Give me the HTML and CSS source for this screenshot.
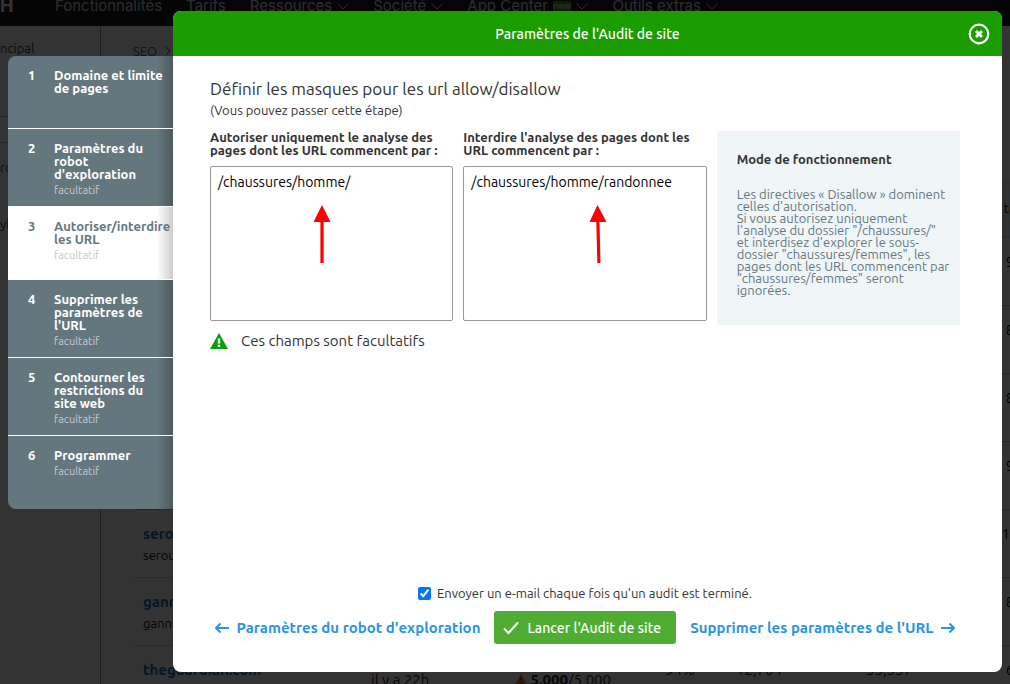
FILE: index.html
```html
<!DOCTYPE html>
<html lang="fr">
  <head>
    <meta charset="UTF-8">
    <meta name="viewport" content="width=device-width,initial-scale=1.0">
    <title>Paramètres de l'Audit de site</title>
    <link rel="stylesheet" href="styles.css">
  </head>
  <body>
    <div class="page">
      <header class="topbar">
        <span class="logo">H</span>
        <nav class="nav">
          <a href="#">Fonctionnalités</a>
          <a href="#">Tarifs</a>
          <a href="#">Ressources <svg class="chev" viewBox="0 0 12 7"><path d="M0.5 0.5 6 6 11.5 0.5"/></svg></a>
          <a href="#">Société <svg class="chev" viewBox="0 0 12 7"><path d="M0.5 0.5 6 6 11.5 0.5"/></svg></a>
          <a href="#">App Center <span class="new">new</span> <svg class="chev" viewBox="0 0 12 7"><path d="M0.5 0.5 6 6 11.5 0.5"/></svg></a>
          <a href="#">Outils extras <svg class="chev" viewBox="0 0 12 7"><path d="M0.5 0.5 6 6 11.5 0.5"/></svg></a>
        </nav>
      </header>
      <div class="content">
        <aside class="side">
          <div class="side-item">ncipal</div>
          <div class="side-item short"></div>
          <div class="side-item plain">rc</div>
          <div class="side-item plain">yla</div>
        </aside>
        <main class="main">
          <div class="crumbs">SEO <svg viewBox="0 0 6 10"><path d="M1 1 5 5 1 9"/></svg></div>
          <table class="sites">
            <colgroup>
              <col class="c-name"><col class="c-date"><col class="c-pages"><col class="c-score"><col class="c-count"><col><col class="c-num">
            </colgroup>
            <thead>
              <tr><th></th><th></th><th></th><th></th><th></th><th></th><th class="num">te</th></tr>
            </thead>
            <tbody>
              <tr><td></td><td></td><td></td><td></td><td></td><td></td><td class="num">9</td></tr>
              <tr><td></td><td></td><td></td><td></td><td></td><td></td><td class="num">8</td></tr>
              <tr><td></td><td></td><td></td><td></td><td></td><td></td><td class="num">8</td></tr>
              <tr><td></td><td></td><td></td><td></td><td></td><td></td><td class="num">9</td></tr>
              <tr><td><a href="#">sero</a><small>serou</small></td><td></td><td></td><td></td><td></td><td></td><td class="num">10</td></tr>
              <tr><td><a href="#">gann</a><small>ganne</small></td><td></td><td></td><td></td><td></td><td></td><td class="num">8</td></tr>
              <tr>
                <td><a href="#">theguardian.com</a></td>
                <td class="low">il y a 22h</td>
                <td class="low"><svg class="warn" viewBox="0 0 18 16"><path fill="#ff7a1a" d="M9 0 18 16H0Z"/><path fill="#333" d="M8 5h2v5H8zM8 12h2v2H8z"/></svg> <b>5,000</b>/5,000</td>
                <td>94%</td><td>12,704</td><td>33,337</td>
                <td class="num">6</td>
              </tr>
            </tbody>
          </table>
        </main>
      </div>
    </div>
    <div class="overlay"></div>

    <div class="modal">
      <ol class="steps">
        <li class="step"><span class="step-num">1</span><div>Domaine et limite<br>de pages</div></li>
        <li class="step"><span class="step-num">2</span><div>Paramètres du<br>robot<br>d'exploration<small>facultatif</small></div></li>
        <li class="step active"><span class="step-num">3</span><div>Autoriser/interdire<br>les URL<small>facultatif</small></div></li>
        <li class="step"><span class="step-num">4</span><div>Supprimer les<br>paramètres de<br>l'URL<small>facultatif</small></div></li>
        <li class="step"><span class="step-num">5</span><div>Contourner les<br>restrictions du<br>site web<small>facultatif</small></div></li>
        <li class="step"><span class="step-num">6</span><div>Programmer<small>facultatif</small></div></li>
      </ol>

      <section class="dialog" role="dialog" aria-labelledby="dialogTitle">
        <header class="dialog-head">
          <h1 id="dialogTitle">Paramètres de l'Audit de site</h1>
          <button class="close" type="button" aria-label="Fermer">
            <svg viewBox="0 0 22 22"><circle cx="11" cy="11" r="9.300" fill="none" stroke="#fff" stroke-width="2.200"/><path d="M8 8l6 6M14 8l-6 6" stroke="#fff" stroke-width="2.800"/></svg>
          </button>
        </header>

        <form class="dialog-body">
          <h2>Définir les masques pour les url allow/disallow</h2>
          <p class="hint">(Vous pouvez passer cette étape)</p>

          <div class="columns">
            <div class="field">
              <label for="allow">Autoriser uniquement le analyse des<br>pages dont les URL commencent par :</label>
              <textarea id="allow" spellcheck="false">/chaussures/homme/</textarea>
              <svg class="arrow arrow-allow" viewBox="0 0 18 58"><path d="M9 0 17.500 17H10.600V58H7.400V17H0.500Z"/></svg>
            </div>
            <div class="field">
              <label for="disallow">Interdire l'analyse des pages dont les<br>URL commencent par :</label>
              <textarea id="disallow" spellcheck="false">/chaussures/homme/randonnee</textarea>
              <svg class="arrow arrow-disallow" viewBox="0 0 18 58"><path d="M8.500 0 17.500 17H10.500L11.500 58H8.300L7.300 17H0.500Z"/></svg>
            </div>
            <aside class="info">
              <h3>Mode de fonctionnement</h3>
              <p>Les directives « Disallow » dominent<br>celles d'autorisation.<br>Si vous autorisez uniquement<br>l'analyse du dossier "/chaussures/"<br>et interdisez d'explorer le sous-<br>dossier "chaussures/femmes", les<br>pages dont les URL commencent par<br>"chaussures/femmes" seront<br>ignorées.</p>
            </aside>
          </div>

          <p class="note">
            <svg viewBox="0 0 18 16"><path fill="#0a9e0a" d="M9 0 18 16H0Z"/><path fill="#fff" d="M7.800 5.500h2.400v5H7.800zM7.800 11.800h2.400v2.200H7.800z"/></svg>
            Ces champs sont facultatifs
          </p>

          <footer class="foot">
            <label class="mail"><input type="checkbox" checked> Envoyer un e-mail chaque fois qu'un audit est terminé.</label>
            <div class="actions">
              <a href="#"><svg class="dir" viewBox="0 0 16 12"><path d="M15 6H2M6.500 1.500 2 6l4.500 4.500"/></svg>Paramètres du robot d'exploration</a>
              <button class="run" type="button"><svg viewBox="0 0 16 14"><path d="M1 7.500 5.500 12 15 1.500"/></svg>Lancer l'Audit de site</button>
              <a href="#">Supprimer les paramètres de l'URL<svg class="dir" viewBox="0 0 16 12"><path d="M1 6h13M9.500 1.500 14 6l-4.500 4.500"/></svg></a>
            </div>
          </footer>
        </form>
      </section>
    </div>
  </body>
</html>
```
FILE: styles.css
```css
:root{--green:#1b9c00;--slate:#65777e;--blue:#2b94e1;--text:#333;--radius:8px}
*{box-sizing:border-box}
body{margin:0;height:100vh;overflow:hidden;position:relative;font-family:Ubuntu,"Noto Sans","Open Sans",sans-serif;font-size:13px;color:var(--text)}
a{text-decoration:none}
h1,h2,h3,p{margin:0}

/* page behind the dialog */
.page{height:100%;display:flex;flex-direction:column;overflow:hidden;background:#fff}
.topbar{display:flex;align-items:flex-start;background:#1a1a1f;padding-bottom:14px;font-family:Inter,sans-serif}
.logo{width:55px;line-height:12px;font-size:18px;font-weight:700;color:#fff}
.nav{display:flex;gap:24px;line-height:12px;font-size:15px}
.nav a{color:#ddd;white-space:nowrap;display:flex;align-items:center;gap:5px}
.chev{width:12px;height:7px;fill:none;stroke:#ddd}
.new{background:#3f8f2a;color:#b5e8a0;font-size:9px;line-height:10px;font-weight:700}
.content{flex:1;display:flex;min-height:0}
.side{flex:0 0 101px;border-right:1px solid #999}
.side-item{height:91px;padding-top:15px;border-bottom:1px solid #bbb}
.side-item.short{height:26px;padding:0}
.side-item.plain{height:57px;border:0;padding-top:17px}
.main{flex:1;padding:17px 0 0 32px;overflow:hidden}
.crumbs{display:flex;align-items:center;gap:8px;line-height:16px;color:#666}
.crumbs svg{width:6px;height:10px;fill:none;stroke:#444}
.sites{width:calc(100% + 16px);margin-top:121px;border-collapse:collapse;table-layout:fixed}
.c-name{width:228px}
.c-date{width:144px}
.c-pages{width:150px}
.c-score{width:71px}
.c-count{width:130px}
.c-num{width:32px}
.sites th{height:57px;background:#e9eef2;font-weight:400}
.sites td{height:68px;padding:12px 10px 0;border-top:1px solid #ccc;vertical-align:top;white-space:nowrap;font-size:15px;line-height:24px;color:#222}
.sites a{display:block;font-weight:700;color:#1470bd}
.sites small{display:block;font-size:13px;line-height:18px;color:#111}
.sites .num{padding-left:0;padding-right:0;text-align:center;color:#000}
.sites td.low{padding-top:22px}
.warn{width:12px;height:11px}
.overlay{position:absolute;inset:0;background:rgba(0,0,0,.8)}

/* modal = list of steps + white dialog */
.modal{position:absolute;inset:11px 8px 12px;display:flex;align-items:flex-start}
.steps{flex:0 0 165px;margin:45px 0 0;padding:0;list-style:none;border-radius:var(--radius) 0 0 var(--radius);overflow:hidden;background:var(--slate);color:#fff;font-weight:700;line-height:13px}
.step{display:flex;min-height:73px;padding:13px 0 9px 20px;border-bottom:1px solid #fff;white-space:nowrap;background:linear-gradient(to left,rgba(0,0,0,.25),transparent 16px)}
.step:last-child{border-bottom:0}
.step-num{width:26px}
.step small{display:block;margin-top:2px;line-height:14px;font-size:11px;font-weight:400;color:#c3c9cb}
.step.active{background:linear-gradient(to left,rgba(0,0,0,.2),transparent 16px),#fff;color:var(--slate)}
.dialog{flex:1;height:100%;display:flex;flex-direction:column;border-radius:var(--radius);overflow:hidden;background:#fff}
.dialog-head{display:grid;grid-template-columns:1fr auto 1fr;align-items:center;height:45px;padding:0 12px;background:var(--green);color:#fff}
.dialog-head h1{grid-column:2;font-size:14px;font-weight:500}
.close{justify-self:end;width:22px;height:22px;padding:0;border:0;background:none;cursor:pointer}
.close svg{display:block}
.dialog-body{flex:1;display:flex;flex-direction:column;padding:20px 42px 28px 37px}
.dialog-body h2{font-size:17px;line-height:26px;font-weight:400}
.hint{line-height:16px}
.columns{display:grid;grid-template-columns:repeat(3,minmax(0,1fr));gap:10px;margin-top:13px}
.field{position:relative}
.field label{display:block;line-height:13px;font-weight:700;white-space:nowrap}
textarea{display:block;width:100%;height:155px;margin-top:9px;padding:6px 7px;resize:none;border:1px solid #999;border-radius:2px;font:14px/18px Ubuntu,"Noto Sans","Open Sans",sans-serif;color:#000}
.arrow{position:absolute;top:74px;width:18px;height:58px;fill:#f00}
.arrow-allow{left:103px}
.arrow-disallow{left:126px}
.info{padding:20px 20px 29px;background:#f0f5f8;color:#65777e;white-space:nowrap}
.info h3{font-size:13px;line-height:16px;color:#333}
.info p{margin-top:21px;line-height:12px}
.note{display:flex;align-items:center;gap:13px;margin-top:6px;font-size:15px;line-height:20px}
.note svg{width:18px;height:16px}
.foot{margin-top:auto}
.mail{display:flex;align-items:center;justify-content:center;gap:6px;line-height:18px}
.mail input{width:13px;height:13px;margin:0;accent-color:#0075ff}
.actions{display:flex;align-items:center;justify-content:center;gap:14px;margin-top:9px;font-size:15px;white-space:nowrap}
.actions a{display:flex;align-items:center;gap:6px;font-weight:700;color:var(--blue)}
.dir{width:16px;height:12px;fill:none;stroke:var(--blue);stroke-width:2}
.run{display:flex;align-items:center;gap:8px;height:33px;padding:0 15px 0 9px;border:0;border-radius:3px;background:#4fad33;color:#fff;font:500 14px Ubuntu,"Noto Sans","Open Sans",sans-serif;cursor:pointer}
.run svg{width:16px;height:14px;fill:none;stroke:#fff;stroke-width:2}
```
